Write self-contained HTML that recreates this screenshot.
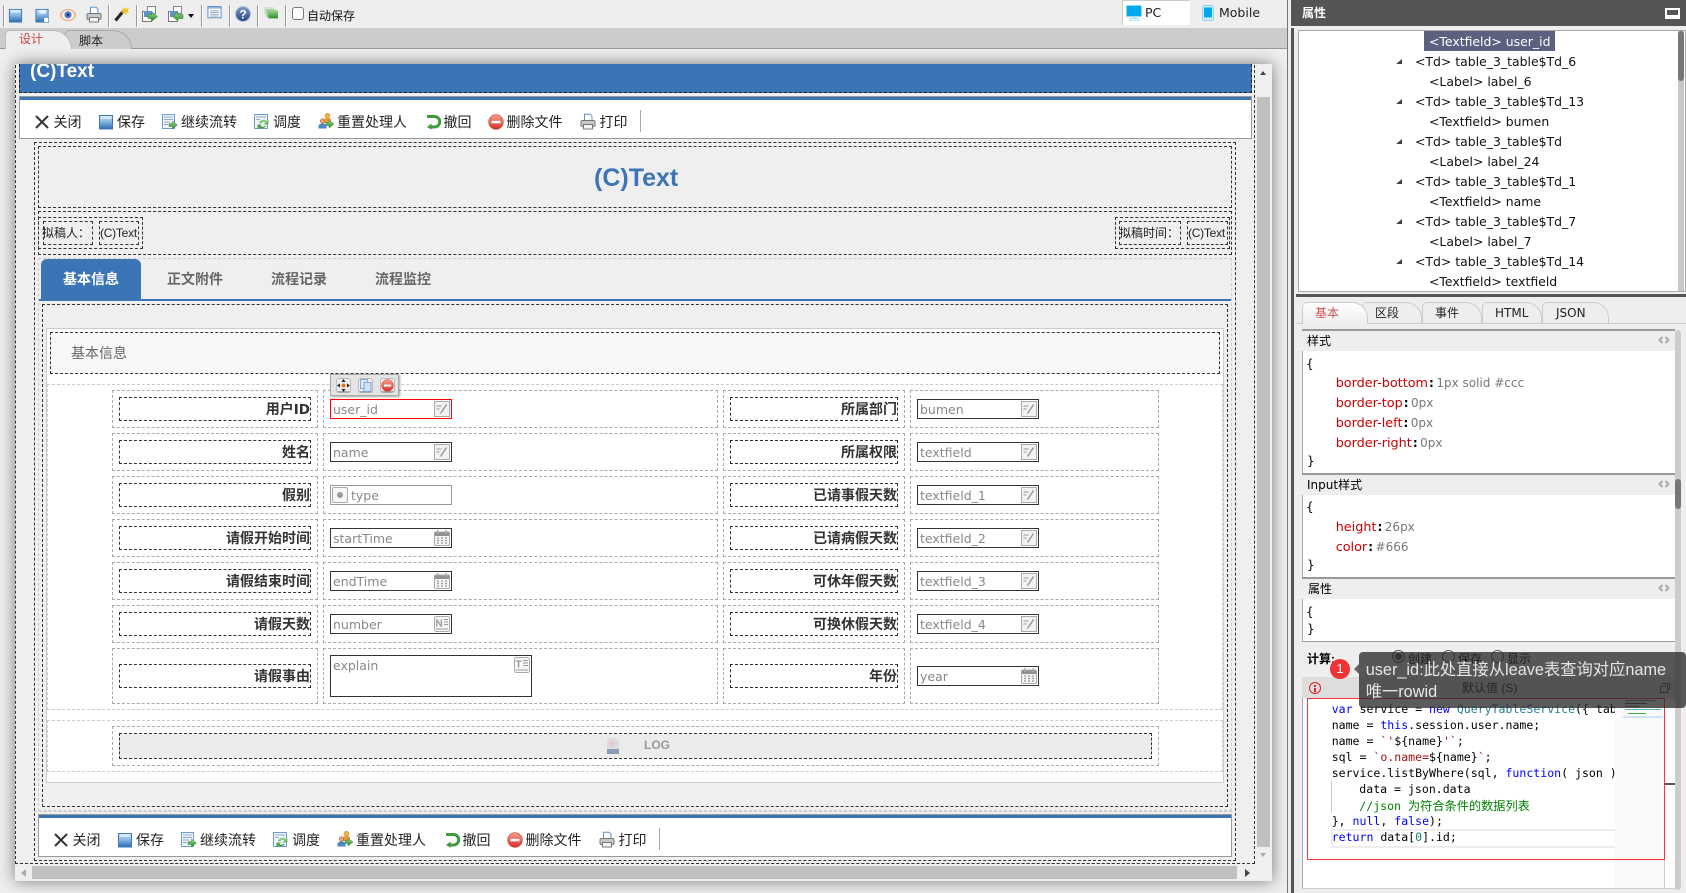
<!DOCTYPE html>
<html lang="zh"><head><meta charset="utf-8"><title>设计</title>
<style>
html,body{margin:0;padding:0;width:1686px;height:893px;overflow:hidden;background:#eee}
body{position:relative;font-family:"DejaVu Sans","Noto Sans CJK SC",sans-serif;font-size:12px;color:#000}
div,span,svg{position:absolute;box-sizing:border-box}
.t{white-space:nowrap;line-height:20px;height:20px}
span.n{position:static}
.ls{font-family:"Liberation Sans","Noto Sans CJK SC",sans-serif}
.d{border:1px dashed #333}.g{border:1px dashed #aaa}.l{border:1px dashed #ccc}
.sep{width:1px;height:22px;top:5px;background:#999;box-shadow:1px 0 0 #fff}
.lb{font:bold 14px/22px "Liberation Sans","Noto Sans CJK SC",sans-serif;color:#333;text-align:right;height:24px;white-space:nowrap}
.i{background:#fff;border:1px solid #333;height:20px;width:122px;color:#888;font-size:12.5px;line-height:19px;padding-left:2px;white-space:nowrap}
.i svg{right:1px;top:1px;width:16px;height:16px}
.bt{font-size:14px;font-family:"Liberation Sans","Noto Sans CJK SC",sans-serif;color:#222}
.tab{border:1px solid #aaa;border-bottom:0;border-radius:5px 20px 0 0}
.rt{top:302px;height:21px;border:1px solid #ccc;border-bottom:0;border-radius:5px 16px 0 0;background:#eee}
.pr{color:#c00;font-size:12.8px}.va{color:#777;font-size:12px}.co{color:#000;font-weight:bold;margin:0 2.5px 0 1px}
.cl{left:1331.7px;white-space:pre;font:11.55px/16px "DejaVu Sans Mono","Noto Sans CJK SC",monospace;color:#000;height:16px}
.k{position:static;color:#00f}.s{position:static;color:#a31515}.c{position:static;color:#008000}.y{position:static;color:#267f99}.u{position:static;color:#098658}
.tree{left:0;white-space:nowrap;font-size:12.45px;line-height:20px;color:#111}
.tri{left:1396px;width:6px;height:5px;background:#444;clip-path:polygon(100% 0,100% 100%,0 100%)}
.rad{width:13px;height:13px;border:1px solid #555;border-radius:50%;background:#eee}
.ch{left:1658px;width:12px;height:8px}
</style></head><body>

<svg width="0" height="0" style="left:0;top:0">
<defs>
<linearGradient id="gb" x1="0" y1="0" x2="0" y2="1"><stop offset="0" stop-color="#cfe3f6"/><stop offset=".5" stop-color="#7fb0e0"/><stop offset="1" stop-color="#2d6cb0"/></linearGradient>
<linearGradient id="gg" x1="0" y1="0" x2="0" y2="1"><stop offset="0" stop-color="#9bd58a"/><stop offset="1" stop-color="#2f8a2a"/></linearGradient>
<linearGradient id="gr" x1="0" y1="0" x2="0" y2="1"><stop offset="0" stop-color="#f9a090"/><stop offset="1" stop-color="#d62f2a"/></linearGradient>
<linearGradient id="gh" x1="0" y1="0" x2="0" y2="1"><stop offset="0" stop-color="#7f9cc8"/><stop offset="1" stop-color="#24467f"/></linearGradient>
<symbol id="save" viewBox="0 0 16 16"><rect x="1.5" y="1.5" width="13" height="13.5" fill="url(#gb)" stroke="#3e78b4"/><rect x="3" y="2" width="10" height="3" fill="#dcecfa" opacity=".8"/></symbol>
<symbol id="saveas" viewBox="0 0 16 16"><rect x="1.5" y="1.5" width="13" height="13.5" fill="url(#gb)" stroke="#3e78b4"/><rect x="5" y="2" width="7" height="4" fill="#e8f2fb"/><rect x="10" y="10" width="5" height="5.5" fill="#fff" stroke="#3e78b4" stroke-width=".6"/></symbol>
<symbol id="eye" viewBox="0 0 16 16"><ellipse cx="8" cy="8" rx="7.7" ry="5.8" fill="#eebc9c" stroke="#d9a184" stroke-width=".5"/><ellipse cx="8" cy="8" rx="6" ry="4.6" fill="#fbf6f0"/><circle cx="8" cy="7.8" r="3.6" fill="#4d7ecb"/><circle cx="8" cy="7.8" r="1.5" fill="#123a80"/></symbol>
<symbol id="print" viewBox="0 0 16 16"><path d="M4.5.7h5.5l2 2V7h-7.5z" fill="#fff" stroke="#5f93cc"/><rect x="1" y="7" width="14" height="6" rx="1.5" fill="#c9c9c9" stroke="#777"/><rect x="3.5" y="11" width="9" height="4.5" fill="#f4f4f4" stroke="#777"/></symbol>
<symbol id="wand" viewBox="0 0 16 16"><path d="M1.5 15L9 6" stroke="#222" stroke-width="3"/><path d="M8 7l1.5-1.8" stroke="#999" stroke-width="3"/><path d="M11 .5l1 2.8 3-.8-1.5 2.7 2 2-3-.2-1 2.7-1.2-2.6-2.9.2 2-2.2-1.3-2.6 2.8.8z" fill="#f3c318"/></symbol>
<symbol id="exp" viewBox="0 0 16 16"><rect x="5.5" y=".5" width="8" height="7" fill="#fff" stroke="#888"/><rect x=".5" y="5.5" width="9" height="10" fill="#fff" stroke="#777"/><rect x="2" y="5" width="8" height="6" fill="#5f93cc"/><path d="M6 8.5h4V6l5.5 4.5L10 15v-2.500H6z" fill="url(#gg)" stroke="#2b7a2b" stroke-width=".5"/></symbol>
<symbol id="imp" viewBox="0 0 16 16"><rect x="5.5" y=".5" width="8" height="7" fill="#fff" stroke="#888"/><rect x=".5" y="5.5" width="9" height="10" fill="#fff" stroke="#777"/><rect x="2" y="5" width="8" height="6" fill="#5f93cc"/><path d="M15 8.5h-5V6l-5.5 4.5L10 15v-2.500h5z" fill="url(#gg)" stroke="#2b7a2b" stroke-width=".5"/></symbol>
<symbol id="list" viewBox="0 0 16 16"><rect x=".5" y=".5" width="15" height="13" fill="#fff" stroke="#4f7fbf"/><rect x="1" y="1" width="14" height="2" fill="#8fb4e0"/><path d="M3 5.5h10M3 7.5h10M3 9.5h10M3 11.5h10" stroke="#8c9cb8"/></symbol>
<symbol id="help" viewBox="0 0 16 16"><circle cx="8" cy="8" r="7.5" fill="url(#gh)" stroke="#b8c4d8"/><text x="8" y="12.5" text-anchor="middle" font-family="Liberation Sans" font-weight="bold" font-size="12" fill="#fff">?</text></symbol>
<symbol id="lay" viewBox="0 0 16 16"><rect x="0" y="0" width="11" height="9" fill="#cfe5c8"/><rect x="2.5" y="2.5" width="11" height="9" fill="#8fc38a" opacity=".8"/><rect x="5" y="4" width="11" height="9" fill="url(#gg)"/></symbol>
<symbol id="x" viewBox="0 0 16 16"><path d="M2 2l12 12M14 2L2 14" stroke="#333" stroke-width="2"/></symbol>
<symbol id="form" viewBox="0 0 16 16"><rect x=".5" y=".5" width="12" height="14" fill="#eef4fb" stroke="#6f9ccf"/><path d="M2 3h9M2 5.5h9M2 8h6M2 10.5h4" stroke="#93aacb"/><path d="M7 9.5h3.5V7l5 4-5 4v-2.5H7z" fill="url(#gg)" stroke="#2b7a2b" stroke-width=".4"/></symbol>
<symbol id="ref" viewBox="0 0 16 16"><rect x=".5" y=".5" width="13" height="14" fill="#eef4fb" stroke="#6f9ccf"/><path d="M2 3h10M2 5.5h4" stroke="#93aacb"/><path d="M5 9a5 5 0 0 1 8-2l1.5-1.5v5h-5l2-1.8a3 3 0 0 0-4.5.8zM12 12a5 5 0 0 1-7 1.5L3.5 15v-4.5h4.5l-1.5 1.5a3 3 0 0 0 4 0z" fill="url(#gg)"/></symbol>
<symbol id="usr" viewBox="0 0 17 16"><circle cx="9.5" cy="2.8" r="2.5" fill="#f1b24a" stroke="#b87818" stroke-width=".5"/><path d="M6 10V7q0-2 3.5-2T13 7v3z" fill="#e59a30"/><circle cx="4.5" cy="8" r="2.3" fill="#e7a878" stroke="#8a4a2a" stroke-width=".5"/><path d="M.5 15.5v-2q0-3 4-3t4 3v2z" fill="#4a86c8"/><path d="M8 9.5h3V7l5 4-5 4v-2.5H8z" fill="url(#gg)" stroke="#2b7a2b" stroke-width=".4"/></symbol>
<symbol id="undo" viewBox="0 0 16 16"><path d="M2 2.5h7.5a5 5 0 0 1 0 10.500H5" fill="none" stroke="#3f9a3a" stroke-width="3"/><path d="M6.5 9.5L2 13l4.500 2.800z" fill="#3f9a3a"/></symbol>
<symbol id="del" viewBox="0 0 16 16"><circle cx="8" cy="8" r="7.3" fill="url(#gr)" stroke="#c83a30" stroke-width=".6"/><rect x="3.5" y="6.8" width="9" height="2.5" fill="#fff"/></symbol>
<symbol id="pen" viewBox="0 0 16 16"><rect x=".5" y=".5" width="15" height="15" fill="#f2f2f2" stroke="#aaa"/><path d="M2.5 5h5M2.5 8h3" stroke="#aaa" stroke-width="1.3"/><path d="M6.5 12.5L12.5 3.500" stroke="#999" stroke-width="1.5"/></symbol>
<symbol id="cal" viewBox="0 0 16 16"><rect x=".5" y="2" width="15" height="13.5" rx="1" fill="#f4f4f4" stroke="#aaa"/><rect x="1" y="2.5" width="14" height="3.5" fill="#8f8f8f"/><rect x="3" y="0" width="1.5" height="4" fill="#aaa"/><rect x="11.5" y="0" width="1.5" height="4" fill="#aaa"/><path d="M3 8h2M7 8h2M11 8h2M3 10.5h2M7 10.5h2M11 10.5h2M3 13h2M7 13h2M11 13h2" stroke="#999" stroke-width="1.2"/></symbol>
<symbol id="num" viewBox="0 0 16 16"><rect x=".5" y=".5" width="15" height="15" rx="2" fill="#f6f6f6" stroke="#aaa"/><text x="1.5" y="10.5" font-family="Liberation Sans" font-weight="bold" font-size="10" fill="#999">N</text><path d="M10 3.5h4M10 6h4M10 8.5h4M2 13h12" stroke="#999"/></symbol>
<symbol id="txa" viewBox="0 0 16 16"><rect x=".5" y=".5" width="15" height="15" rx="2" fill="#f6f6f6" stroke="#aaa"/><text x="1.5" y="10.5" font-family="Liberation Sans" font-weight="bold" font-size="10" fill="#999">T</text><path d="M9 3.5h5M9 6h5M9 8.5h5M2 13h12" stroke="#999"/></symbol>
<symbol id="mon" viewBox="0 0 16 16"><rect x=".5" y=".5" width="15" height="11" rx="1" fill="#00a8ee" stroke="#8fd6f5"/><rect x="5.5" y="11.5" width="5" height="2" fill="#bfe8f8"/><rect x="3.5" y="13.5" width="9" height="2" fill="#fff" stroke="#8fd6f5" stroke-width=".7"/></symbol>
<symbol id="mob" viewBox="0 0 12 16"><rect x=".5" y=".5" width="11" height="15" rx="1.5" fill="#cdeefb" stroke="#8fd6f5"/><rect x="2" y="2.5" width="8" height="10" fill="#00a8ee"/></symbol>
<symbol id="chev" viewBox="0 0 12 8"><path d="M4.5 1L1.5 4l3 3M7.5 1l3 3-3 3" fill="none" stroke="#aaa" stroke-width="2"/></symbol>
</defs></svg>

<!-- main area -->
<div style="left:0;top:48px;width:1287px;height:845px;overflow:hidden;background:#efefef">
 <div style="left:15px;top:16px;width:1257px;height:817px;background:#efefef;box-shadow:0 0 15px rgba(0,0,0,.5);overflow:hidden">
 <div style="left:-15px;top:-64px;width:1287px;height:893px">

  <div class="d" style="left:15px;top:50px;width:1240px;height:814px"></div>
  <div style="left:19px;top:64px;width:1233px;height:29px;background:#3b75b5;border:1px dashed #222;border-top:0"></div>
  <div class="t ls" style="left:30px;top:62px;color:#fff;font-weight:bold;font-size:19px">(C)Text</div>

  <!-- top bar -->
  <div style="left:19px;top:96px;width:1233px;height:43px;background:#fff;border:1px solid #999;border-top:1px solid #999">
   <div style="left:0;top:0;width:1231px;height:3px;background:#3b75b5"></div>
  </div>

  <div class="d" style="left:34px;top:142px;width:1202px;height:719px"></div>
  <div class="d" style="left:38px;top:146px;width:1194px;height:62px"></div>
  <div class="t ls" style="left:594px;top:168px;color:#3b75b5;font-weight:bold;font-size:25px">(C)Text</div>

  <div class="d" style="left:38px;top:211px;width:1194px;height:44px"></div>
  <div class="d" style="left:38px;top:217px;width:105px;height:32px"></div>
  <div class="d" style="left:43px;top:221px;width:50px;height:24px"></div>
  <div class="t ls" style="left:42px;top:223px;font-size:12px;color:#222">拟稿人：</div>
  <div class="d" style="left:99px;top:221px;width:40px;height:24px"></div>
  <div class="t ls" style="left:100px;top:223px;font-size:12px;color:#222;letter-spacing:-.25px">(C)Text</div>
  <div class="d" style="left:1115px;top:217px;width:115px;height:32px"></div>
  <div class="d" style="left:1119px;top:221px;width:62px;height:24px"></div>
  <div class="t ls" style="left:1119px;top:223px;font-size:12px;color:#222">拟稿时间：</div>
  <div class="d" style="left:1187px;top:221px;width:41px;height:24px"></div>
  <div class="t ls" style="left:1188px;top:223px;font-size:12px;color:#222;letter-spacing:-.25px">(C)Text</div>

  <!-- tabs -->
  <div class="l" style="left:38px;top:258px;width:1194px;height:553px"></div>
  <div style="left:41px;top:259px;width:100px;height:41px;background:#3b75b5;border-radius:6px 6px 0 0"></div>
  <div style="left:39px;top:299px;width:1192px;height:2px;background:#3b75b5"></div>
  <div class="t ls" style="left:63px;top:269px;font-size:14px;font-weight:bold;color:#fff">基本信息</div>
  <div class="t ls" style="left:167px;top:269px;font-size:14px;font-weight:bold;color:#666">正文附件</div>
  <div class="t ls" style="left:271px;top:269px;font-size:14px;font-weight:bold;color:#666">流程记录</div>
  <div class="t ls" style="left:375px;top:269px;font-size:14px;font-weight:bold;color:#666">流程监控</div>

  <div class="d" style="left:42px;top:304px;width:1186px;height:503px"></div>
  <div style="left:46px;top:328px;width:1178px;height:455px;background:#fff;border:1px solid #ccc"></div>
  <div class="d" style="left:50px;top:332px;width:1170px;height:42px;background:#f7f7f7"></div>
  <div class="t ls" style="left:71px;top:343px;font-size:14px;color:#666">基本信息</div>
  <div class="l" style="left:47px;top:384px;width:1176px;height:326px"></div>
  <div class="l" style="left:47px;top:720px;width:1176px;height:52px"></div>

  <!-- row 1 -->
  <div class="g" style="left:112px;top:390px;width:206px;height:38px"></div><div class="g" style="left:323px;top:390px;width:395px;height:38px"></div><div class="g" style="left:723px;top:390px;width:182px;height:38px"></div><div class="g" style="left:910px;top:390px;width:249px;height:38px"></div>
  <div class="d lb" style="left:119px;top:397px;width:192px">用户<span class="n" style="font-family:'DejaVu Sans';font-size:13.5px">ID</span></div><div class="d lb" style="left:730px;top:397px;width:168px">所属部门</div>
  <div class="i" style="left:330px;top:399px;border-color:#f00">user_id<svg><use href="#pen"/></svg></div>
  <div class="i" style="left:917px;top:399px">bumen<svg><use href="#pen"/></svg></div>
  <!-- row 2 -->
  <div class="g" style="left:112px;top:433px;width:206px;height:38px"></div><div class="g" style="left:323px;top:433px;width:395px;height:38px"></div><div class="g" style="left:723px;top:433px;width:182px;height:38px"></div><div class="g" style="left:910px;top:433px;width:249px;height:38px"></div>
  <div class="d lb" style="left:119px;top:440px;width:192px">姓名</div><div class="d lb" style="left:730px;top:440px;width:168px">所属权限</div>
  <div class="i" style="left:330px;top:442px">name<svg><use href="#pen"/></svg></div>
  <div class="i" style="left:917px;top:442px">textfield<svg><use href="#pen"/></svg></div>
  <!-- row 3 -->
  <div class="g" style="left:112px;top:476px;width:206px;height:38px"></div><div class="g" style="left:323px;top:476px;width:395px;height:38px"></div><div class="g" style="left:723px;top:476px;width:182px;height:38px"></div><div class="g" style="left:910px;top:476px;width:249px;height:38px"></div>
  <div class="d lb" style="left:119px;top:483px;width:192px">假别</div><div class="d lb" style="left:730px;top:483px;width:168px">已请事假天数</div>
  <div class="i" style="left:330px;top:485px;border-color:#999;padding-left:20px">type<div style="left:1px;top:1px;width:16px;height:16px;border:1px solid #aaa;border-radius:2px;background:#f6f6f6"><div style="left:4px;top:4px;width:6px;height:6px;border-radius:50%;background:#999"></div></div></div>
  <div class="i" style="left:917px;top:485px">textfield_1<svg><use href="#pen"/></svg></div>
  <!-- row 4 -->
  <div class="g" style="left:112px;top:519px;width:206px;height:38px"></div><div class="g" style="left:323px;top:519px;width:395px;height:38px"></div><div class="g" style="left:723px;top:519px;width:182px;height:38px"></div><div class="g" style="left:910px;top:519px;width:249px;height:38px"></div>
  <div class="d lb" style="left:119px;top:526px;width:192px">请假开始时间</div><div class="d lb" style="left:730px;top:526px;width:168px">已请病假天数</div>
  <div class="i" style="left:330px;top:528px">startTime<svg><use href="#cal"/></svg></div>
  <div class="i" style="left:917px;top:528px">textfield_2<svg><use href="#pen"/></svg></div>
  <!-- row 5 -->
  <div class="g" style="left:112px;top:562px;width:206px;height:38px"></div><div class="g" style="left:323px;top:562px;width:395px;height:38px"></div><div class="g" style="left:723px;top:562px;width:182px;height:38px"></div><div class="g" style="left:910px;top:562px;width:249px;height:38px"></div>
  <div class="d lb" style="left:119px;top:569px;width:192px">请假结束时间</div><div class="d lb" style="left:730px;top:569px;width:168px">可休年假天数</div>
  <div class="i" style="left:330px;top:571px">endTime<svg><use href="#cal"/></svg></div>
  <div class="i" style="left:917px;top:571px">textfield_3<svg><use href="#pen"/></svg></div>
  <!-- row 6 -->
  <div class="g" style="left:112px;top:605px;width:206px;height:38px"></div><div class="g" style="left:323px;top:605px;width:395px;height:38px"></div><div class="g" style="left:723px;top:605px;width:182px;height:38px"></div><div class="g" style="left:910px;top:605px;width:249px;height:38px"></div>
  <div class="d lb" style="left:119px;top:612px;width:192px">请假天数</div><div class="d lb" style="left:730px;top:612px;width:168px">可换休假天数</div>
  <div class="i" style="left:330px;top:614px">number<svg><use href="#num"/></svg></div>
  <div class="i" style="left:917px;top:614px">textfield_4<svg><use href="#pen"/></svg></div>
  <!-- row 7 -->
  <div class="g" style="left:112px;top:648px;width:206px;height:56px"></div><div class="g" style="left:323px;top:648px;width:395px;height:56px"></div><div class="g" style="left:723px;top:648px;width:182px;height:56px"></div><div class="g" style="left:910px;top:648px;width:249px;height:56px"></div>
  <div class="d lb" style="left:119px;top:664px;width:192px">请假事由</div><div class="d lb" style="left:730px;top:664px;width:168px">年份</div>
  <div class="i" style="left:330px;top:655px;width:202px;height:42px">explain<svg><use href="#txa"/></svg></div>
  <div class="i" style="left:917px;top:666px">year<svg><use href="#cal"/></svg></div>

  <!-- LOG -->
  <div class="g" style="left:112px;top:726px;width:1047px;height:40px"></div>
  <div class="d" style="left:119px;top:733px;width:1033px;height:26px;background:#ececec"></div>
  <svg style="left:606px;top:738px;width:14px;height:16px" viewBox="0 0 14 16"><path d="M1 0h9l3 3v13H1z" fill="#ddd"/><rect x="3" y="3" width="5" height="6" fill="#e8c8d4"/><rect x="1" y="11" width="12" height="5" fill="#8a9cb0"/></svg>
  <div class="t ls" style="left:644px;top:735px;font-size:12px;font-weight:bold;color:#999">LOG</div>

  <!-- mini toolbar -->
  <div style="left:330px;top:374px;width:69px;height:22px;background:#e4e4e4;border:1px solid #aaa;box-shadow:1px 1px 2px rgba(0,0,0,.35)">
   <div style="left:5px;top:3px;width:15px;height:15px;border-radius:3px;background:#eee;border:1px solid #bbb;border-bottom:2px solid #aaa"></div>
   <svg style="left:6px;top:4px;width:13px;height:13px" viewBox="0 0 13 13"><path d="M6.5 0l2 3h-4zM6.5 13l2-3h-4zM0 6.5l3-2v4zM13 6.5l-3-2v4z" fill="#222"/><circle cx="6.5" cy="6.5" r="2" fill="#e8761c"/></svg>
   <div style="left:27px;top:3px;width:15px;height:15px;border-radius:3px;background:#eee;border:1px solid #bbb;border-bottom:2px solid #aaa"></div>
   <svg style="left:29px;top:4px;width:12px;height:13px" viewBox="0 0 12 13"><rect x=".5" y=".5" width="7" height="9" fill="#dfeafa" stroke="#7fa6d8"/><rect x="4" y="3.5" width="7" height="9" fill="#cfe0f7" stroke="#7fa6d8"/></svg>
   <div style="left:49px;top:3px;width:15px;height:15px;border-radius:3px;background:#eee;border:1px solid #bbb;border-bottom:2px solid #aaa"></div>
   <svg style="left:50px;top:4px;width:13px;height:13px"><use href="#del"/></svg>
  </div>

  <!-- bottom bar frame -->
  <div style="left:38px;top:814px;width:1194px;height:43px;background:#fff;border:1px solid #999">
   <div style="left:0;top:0;width:1192px;height:3px;background:#3b75b5"></div>
  </div>
  <div class="l" style="left:34px;top:811px;width:1198px;height:1px;border-width:1px 0 0"></div>
  <div class="d" style="left:15px;top:863px;width:1240px;height:1px;border-width:1px 0 0"></div>

  <!-- bar items top -->
  <div style="left:0;top:0;width:700px;height:140px">
   <svg style="left:34px;top:114px;width:16px;height:16px"><use href="#x"/></svg><div class="t bt" style="left:53.5px;top:112px">关闭</div>
   <svg style="left:98px;top:114px;width:16px;height:16px"><use href="#save"/></svg><div class="t bt" style="left:117px;top:112px">保存</div>
   <svg style="left:162px;top:114px;width:16px;height:16px"><use href="#form"/></svg><div class="t bt" style="left:181px;top:112px">继续流转</div>
   <svg style="left:254px;top:114px;width:16px;height:16px"><use href="#ref"/></svg><div class="t bt" style="left:273px;top:112px">调度</div>
   <svg style="left:318px;top:113px;width:17px;height:16px"><use href="#usr"/></svg><div class="t bt" style="left:337px;top:112px">重置处理人</div>
   <svg style="left:425px;top:114px;width:16px;height:16px"><use href="#undo"/></svg><div class="t bt" style="left:443.5px;top:112px">撤回</div>
   <svg style="left:488px;top:114px;width:16px;height:16px"><use href="#del"/></svg><div class="t bt" style="left:506.5px;top:112px">删除文件</div>
   <svg style="left:580px;top:113px;width:16px;height:17px"><use href="#print"/></svg><div class="t bt" style="left:599.5px;top:112px">打印</div>
   <div style="left:640px;top:110px;width:1px;height:22px;background:#aaa"></div>
  </div>
  <!-- bar items bottom -->
  <div style="left:19px;top:718px;width:700px;height:140px">
   <svg style="left:34px;top:114px;width:16px;height:16px"><use href="#x"/></svg><div class="t bt" style="left:53.5px;top:112px">关闭</div>
   <svg style="left:98px;top:114px;width:16px;height:16px"><use href="#save"/></svg><div class="t bt" style="left:117px;top:112px">保存</div>
   <svg style="left:162px;top:114px;width:16px;height:16px"><use href="#form"/></svg><div class="t bt" style="left:181px;top:112px">继续流转</div>
   <svg style="left:254px;top:114px;width:16px;height:16px"><use href="#ref"/></svg><div class="t bt" style="left:273px;top:112px">调度</div>
   <svg style="left:318px;top:113px;width:17px;height:16px"><use href="#usr"/></svg><div class="t bt" style="left:337px;top:112px">重置处理人</div>
   <svg style="left:425px;top:114px;width:16px;height:16px"><use href="#undo"/></svg><div class="t bt" style="left:443.5px;top:112px">撤回</div>
   <svg style="left:488px;top:114px;width:16px;height:16px"><use href="#del"/></svg><div class="t bt" style="left:506.5px;top:112px">删除文件</div>
   <svg style="left:580px;top:113px;width:16px;height:17px"><use href="#print"/></svg><div class="t bt" style="left:599.5px;top:112px">打印</div>
   <div style="left:640px;top:110px;width:1px;height:22px;background:#aaa"></div>
  </div>

  <!-- scrollbars -->
  <div style="left:1257px;top:97px;width:13px;height:750px;background:#c0c0c0"></div>
  <div style="left:1260px;top:71px;width:0;height:0;border:3.5px solid transparent;border-top:0;border-bottom:4px solid #444"></div>
  <div style="left:1260px;top:853px;width:0;height:0;border:3.5px solid transparent;border-bottom:0;border-top:4px solid #aaa"></div>
  <div style="left:32px;top:866px;width:1205px;height:13px;background:#c0c0c0"></div>
  <div style="left:21px;top:869px;width:0;height:0;border:4px solid transparent;border-left:0;border-right:5px solid #aaa"></div>
  <div style="left:1245px;top:869px;width:0;height:0;border:4px solid transparent;border-right:0;border-left:5px solid #444"></div>
 </div></div>
</div>

<!-- top toolbar -->
<div style="left:0;top:0;width:1287px;height:28px;background:#eee"></div>
<div style="left:0;top:28px;width:1287px;height:21px;background:#ccc;border-bottom:1px solid #999"></div>
<div class="sep" style="left:3px"></div><div class="sep" style="left:108px"></div><div class="sep" style="left:136px"></div><div class="sep" style="left:201px"></div><div class="sep" style="left:229px"></div><div class="sep" style="left:257px"></div><div class="sep" style="left:285px"></div>
<svg style="left:8px;top:8px;width:15px;height:15px"><use href="#save"/></svg>
<svg style="left:34px;top:8px;width:16px;height:15px"><use href="#saveas"/></svg>
<svg style="left:60px;top:7px;width:16px;height:16px"><use href="#eye"/></svg>
<svg style="left:86px;top:6px;width:16px;height:17px"><use href="#print"/></svg>
<svg style="left:114px;top:5px;width:16px;height:17px"><use href="#wand"/></svg>
<svg style="left:142px;top:6px;width:16px;height:16px"><use href="#exp"/></svg>
<svg style="left:168px;top:6px;width:16px;height:16px"><use href="#imp"/></svg>
<div style="left:188px;top:14px;width:0;height:0;border:3px solid transparent;border-bottom:0;border-top:4px solid #111"></div>
<svg style="left:207px;top:6px;width:15px;height:14px"><use href="#list"/></svg>
<svg style="left:235px;top:6px;width:16px;height:16px"><use href="#help"/></svg>
<svg style="left:263px;top:7px;width:16px;height:14px"><use href="#lay"/></svg>
<div style="left:292px;top:7px;width:12px;height:13px;background:#fff;border:1px solid #777;border-radius:3px"></div>
<div class="t ls" style="left:307px;top:6px;font-size:12px;color:#111">自动保存</div>

<div style="left:1122px;top:0;width:68px;height:25px;background:#fff;border:1px solid #ccc;border-width:1px 0 0 1px"></div>
<svg style="left:1126px;top:5px;width:16px;height:16px"><use href="#mon"/></svg>
<div class="t" style="left:1145px;top:3px;font-size:12.5px;color:#222">PC</div>
<svg style="left:1202px;top:5px;width:12px;height:16px"><use href="#mob"/></svg>
<div class="t" style="left:1219px;top:3px;font-size:12.5px;color:#222">Mobile</div>

<!-- doc tabs -->
<div class="tab" style="left:65px;top:30px;width:67px;height:19px;background:#ccc;border-color:#aaa;z-index:1"></div>
<div class="t ls" style="left:79px;top:31px;font-size:12px;color:#222;z-index:2">脚本</div>
<div class="tab" style="left:5px;top:30px;width:67px;height:19px;background:#eee;border-color:#bbb;z-index:3"></div>
<div class="t ls" style="left:19px;top:29px;font-size:12px;color:#c44;z-index:4">设计</div>

<!-- right panel -->
<div style="left:1287px;top:0;width:1px;height:893px;background:#777"></div>
<div style="left:1288px;top:0;width:398px;height:893px;background:#eee"></div>
<div style="left:1291px;top:0;width:395px;height:26px;background:#555"></div>
<div style="left:1291px;top:28px;width:3px;height:865px;background:#555"></div>
<div class="t ls" style="left:1302px;top:3px;color:#fff;font-weight:bold;font-size:12px">属性</div>
<div style="left:1665px;top:8px;width:15px;height:11px;background:#fff;border:1px solid #fff;border-width:2px 2px 3px"><div style="left:0;top:0;width:11px;height:5px;background:#555"></div></div>

<!-- tree -->
<div style="left:1298px;top:30px;width:388px;height:262px;background:#fff;border:1px solid #aaa"></div>
<div style="left:1678px;top:31px;width:6px;height:260px;background:#c8c8c8"></div>
<div style="left:1678px;top:31px;width:6px;height:50px;background:#777;border-radius:3px"></div>
<div style="left:1424px;top:31px;width:131px;height:20px;background:#5c6180"></div>
<div class="tree" style="left:1429px;top:32px;color:#fff">&lt;Textfield&gt; user_id</div>
<div class="tri" style="top:59px"></div><div class="tree" style="left:1415px;top:52px">&lt;Td&gt; table_3_table$Td_6</div>
<div class="tree" style="left:1429px;top:72px">&lt;Label&gt; label_6</div>
<div class="tri" style="top:99px"></div><div class="tree" style="left:1415px;top:92px">&lt;Td&gt; table_3_table$Td_13</div>
<div class="tree" style="left:1429px;top:112px">&lt;Textfield&gt; bumen</div>
<div class="tri" style="top:139px"></div><div class="tree" style="left:1415px;top:132px">&lt;Td&gt; table_3_table$Td</div>
<div class="tree" style="left:1429px;top:152px">&lt;Label&gt; label_24</div>
<div class="tri" style="top:179px"></div><div class="tree" style="left:1415px;top:172px">&lt;Td&gt; table_3_table$Td_1</div>
<div class="tree" style="left:1429px;top:192px">&lt;Textfield&gt; name</div>
<div class="tri" style="top:219px"></div><div class="tree" style="left:1415px;top:212px">&lt;Td&gt; table_3_table$Td_7</div>
<div class="tree" style="left:1429px;top:232px">&lt;Label&gt; label_7</div>
<div class="tri" style="top:259px"></div><div class="tree" style="left:1415px;top:252px">&lt;Td&gt; table_3_table$Td_14</div>
<div class="tree" style="left:1429px;top:272px">&lt;Textfield&gt; textfield</div>

<div style="left:1296px;top:294px;width:390px;height:3px;background:#555"></div>

<!-- prop tabs -->
<div style="left:1296px;top:323px;width:390px;height:1px;background:#ccc"></div>
<div class="rt" style="left:1542px;width:67px"></div><div class="rt" style="left:1482px;width:60px"></div><div class="rt" style="left:1422px;width:60px"></div><div class="rt" style="left:1362px;width:60px"></div>
<div class="rt" style="left:1302px;width:66px;height:22px;background:linear-gradient(#fff,#eee)"></div>
<div class="t ls" style="left:1315px;top:303px;font-size:12px;color:#c55">基本</div>
<div class="t ls" style="left:1375px;top:303px;font-size:12px;color:#222">区段</div>
<div class="t ls" style="left:1435px;top:303px;font-size:12px;color:#222">事件</div>
<div class="t" style="left:1495px;top:303px;color:#222">HTML</div>
<div class="t" style="left:1556px;top:303px;color:#222">JSON</div>

<!-- prop panels -->
<div style="left:1302px;top:329px;width:373px;height:560px;background:#fff;border-left:1px solid #aaa"></div>
<div style="left:1675px;top:330px;width:6px;height:560px;background:#ccc;border-radius:3px"></div>
<div style="left:1675px;top:479px;width:6px;height:30px;background:#777;border-radius:3px"></div>

<div style="left:1302px;top:329px;width:373px;height:22px;background:#eee;border-top:2px solid #999"></div>
<div class="t ls" style="left:1307px;top:331px;font-size:12px">样式</div>
<svg class="ch" style="top:336px"><use href="#chev"/></svg>
<div class="t" style="left:1306px;top:354px">{</div>
<div class="t" style="left:1335.7px;top:373px"><span class="n pr">border-bottom</span><span class="n co">:</span><span class="n va">1px solid #ccc</span></div>
<div class="t" style="left:1335.7px;top:393px"><span class="n pr">border-top</span><span class="n co">:</span><span class="n va">0px</span></div>
<div class="t" style="left:1335.7px;top:413px"><span class="n pr">border-left</span><span class="n co">:</span><span class="n va">0px</span></div>
<div class="t" style="left:1335.7px;top:433px"><span class="n pr">border-right</span><span class="n co">:</span><span class="n va">0px</span></div>
<div class="t" style="left:1307px;top:451px">}</div>

<div style="left:1302px;top:473px;width:373px;height:22px;background:#eee;border-top:2px solid #999"></div>
<div class="t ls" style="left:1307px;top:475px;font-size:12px"><span class="n" style="font-family:'DejaVu Sans'">Input</span>样式</div>
<svg class="ch" style="top:480px"><use href="#chev"/></svg>
<div class="t" style="left:1306px;top:497px">{</div>
<div class="t" style="left:1335.7px;top:517px"><span class="n pr">height</span><span class="n co">:</span><span class="n va">26px</span></div>
<div class="t" style="left:1335.7px;top:537px"><span class="n pr">color</span><span class="n co">:</span><span class="n va">#666</span></div>
<div class="t" style="left:1307px;top:555px">}</div>

<div style="left:1302px;top:577px;width:373px;height:22px;background:#eee;border-top:2px solid #999"></div>
<div class="t ls" style="left:1308px;top:579px;font-size:12px">属性</div>
<svg class="ch" style="top:584px"><use href="#chev"/></svg>
<div class="t" style="left:1306px;top:602px">{</div>
<div class="t" style="left:1307px;top:619px">}</div>

<div style="left:1302px;top:641px;width:373px;height:36px;background:#eee;border-top:1px solid #999"></div>
<div class="t ls" style="left:1307px;top:649px;font-size:12px;font-weight:bold">计算:</div>
<div class="rad" style="left:1392px;top:650px"><div style="left:2px;top:2px;width:7px;height:7px;border-radius:50%;background:#555"></div></div>
<div class="t ls" style="left:1408px;top:649px;font-size:12px">创建</div>
<div class="rad" style="left:1442px;top:650px"></div><div class="t ls" style="left:1458px;top:649px;font-size:12px">保存</div>
<div class="rad" style="left:1491px;top:650px"></div><div class="t ls" style="left:1507px;top:649px;font-size:12px">显示</div>

<!-- code -->
<div style="left:1302px;top:677px;width:373px;height:21px;background:#ddd"></div>
<div style="left:1309px;top:682px;width:12px;height:12px;border:1px solid #d22;border-radius:50%"><div style="left:4px;top:2px;width:2px;height:2px;background:#d22"></div><div style="left:4px;top:5px;width:2px;height:4px;background:#d22"></div></div>
<div class="t ls" style="left:1462px;top:678px;font-size:12px;color:#222">默认值 (S)</div>
<svg style="left:1660px;top:683px;width:10px;height:10px" viewBox="0 0 10 10"><path d="M2.5.5h7v6h-2M.5 3h7v6.5h-7z" fill="none" stroke="#555"/></svg>

<div style="left:1302px;top:698px;width:313px;height:190px;overflow:hidden">
<div style="left:-1302px;top:-698px;width:1700px;height:900px">
<div class="cl" style="top:701px"><span class="k">var</span> service = <span class="k">new</span> <span class="y">QueryTableService</span>({ table</div>
<div class="cl" style="top:717px">name = <span class="k">this</span>.session.user.name;</div>
<div class="cl" style="top:733px">name = <span class="s">`'</span>${name}<span class="s">'`</span>;</div>
<div class="cl" style="top:749px">sql = <span class="s">`o.name=</span>${name}<span class="s">`</span>;</div>
<div class="cl" style="top:765px">service.listByWhere(sql, <span class="k">function</span>( json )</div>
<div class="cl" style="top:781px;left:1359.3px">data = json.data</div>
<div class="cl" style="top:797px;left:1359.3px"><span class="c">//json <span class="c" style="font-size:12.2px;font-family:'Noto Sans CJK SC',sans-serif">为符合条件的数据列表</span></span></div>
<div class="cl" style="top:813px">}, <span class="k">null</span>, <span class="k">false</span>);</div>
<div style="left:1331px;top:781px;width:1px;height:32px;background:#ccc"></div>
<div style="left:1331px;top:829px;width:300px;height:19px;border:2px solid #eee;border-right:0"></div>
<div class="cl" style="top:829px"><span class="k">return</span> data[<span class="u">0</span>].id;</div>
</div></div>
<div style="left:1615px;top:698px;width:49px;height:190px;background:#fafafa"></div>
<div style="left:1664px;top:698px;width:1px;height:190px;background:#ccc"></div>
<div style="left:1665px;top:783px;width:10px;height:2px;background:#555"></div>
<div style="left:1625px;top:700px;width:30px;height:1px;background:#88a"></div>
<div style="left:1625px;top:703px;width:22px;height:1px;background:#555"></div>
<div style="left:1625px;top:706px;width:14px;height:1px;background:#777"></div>
<div style="left:1625px;top:709px;width:36px;height:1px;background:#5bb"></div>
<div style="left:1628px;top:713px;width:18px;height:1px;background:#4a4"></div>
<div style="left:1623px;top:716px;width:40px;height:2px;background:#cfe3fa"></div>
<div style="left:1302px;top:888px;width:373px;height:1px;background:#ccc"></div>
<div style="left:1307px;top:698px;width:358px;height:162px;border:1px solid #f33"></div>

<!-- tooltip -->
<div style="left:1359px;top:652px;width:327px;height:56px;background:rgba(40,40,40,.76);border-radius:4px"></div>
<div style="left:1354px;top:664px;width:0;height:0;border:5px solid transparent;border-left:0;border-right:5px solid #666"></div>
<div class="t ls" style="left:1365.7px;top:660px;font-size:16.3px;color:#e6e6e6">user_id:此处直接从leave表查询对应name</div>
<div class="t ls" style="left:1365.7px;top:682px;font-size:16.3px;color:#e6e6e6">唯一rowid</div>
<div style="left:1330px;top:659px;width:20px;height:20px;border-radius:50%;background:#f03333"></div>
<div class="t ls" style="left:1330px;top:659px;width:20px;text-align:center;font-size:13px;color:#fff">1</div>

</body></html>
